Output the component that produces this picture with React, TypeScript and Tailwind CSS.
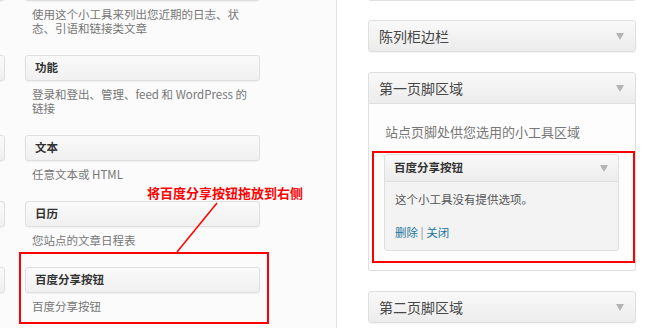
const cardCls =
  'h-[26px] shrink-0 rounded-[3px] border border-[#dfdfdf] bg-gradient-to-b from-[#fafafa] to-[#f0f0f0] shadow-[0_1px_1px_rgba(0,0,0,0.04)] flex items-center';

// the first one is cut off at the top of the picture, so its title is not shown
const leftWidgets = [
  { title: '', desc: ['使用这个小工具来列出您近期的日志、状', '态、引语和链接类文章'] },
  { title: '功能', desc: ['登录和登出、管理、feed 和 WordPress 的', '链接'] },
  { title: '文本', desc: ['任意文本或 HTML'] },
  { title: '日历', desc: ['您站点的文章日程表'] },
  { title: '百度分享按钮', desc: ['百度分享按钮'] },
];

function Arrow() {
  return (
    <svg width="8" height="7" viewBox="0 0 8 7" className="shrink-0">
      <path d="M0 0 L8 0 L4 7 Z" fill="#b4b4b4" />
    </svg>
  );
}

function SidebarHead({ title, open }: { title: string; open?: boolean }) {
  return (
    <div
      className={`h-[32px] flex items-center justify-between pl-[10px] pr-[11px] border border-[#dfdfdf] bg-gradient-to-b from-[#f9f9f9] to-[#ececec] ${
        open ? 'rounded-t-[3px]' : 'rounded-[3px] shadow-[0_1px_1px_rgba(0,0,0,0.05)]'
      }`}
    >
      <span className="text-[14px] text-[#464646] leading-none">{title}</span>
      <Arrow />
    </div>
  );
}

export default function App() {
  return (
    <div className="relative w-[650px] h-[328px] overflow-hidden flex bg-white font-['Noto_Sans_CJK_SC','Liberation_Sans',sans-serif]">
      {/* available widgets */}
      <div className="w-[337px] shrink-0 border-r border-[#e3e3e3] bg-[#fbfbfb]">
        <div className="mt-[-25px] flex flex-col">
          {leftWidgets.map((w, i) => (
            <div key={i} className="flex flex-col mb-[20px]">
              <div className="flex gap-[20px]">
                <div className={`${cardCls} w-[235px] ml-[-230px]`} />
                <div className={`${cardCls} w-[235px] pl-[9px]`}>
                  {w.title && <span className="text-[11.5px] font-bold text-[#333]">{w.title}</span>}
                </div>
              </div>
              <p className="ml-[32px] mt-[6px] text-[11.5px] leading-[14px] text-[#777]">
                {w.desc[0]}
                {w.desc[1] && (
                  <>
                    <br />
                    {w.desc[1]}
                  </>
                )}
              </p>
            </div>
          ))}
        </div>
      </div>

      {/* sidebars */}
      <div className="pl-[31px] flex flex-col gap-[20px] w-[299px]">
        <div className="mt-[-31px] h-[32px] rounded-[3px] border border-[#dfdfdf] bg-gradient-to-b from-[#f9f9f9] to-[#ececec]" />
        <div className="mt-[-1px]">
          <SidebarHead title="陈列柜边栏" />
        </div>
        <div>
          <SidebarHead title="第一页脚区域" open />
          <div className="border border-t-0 border-[#dfdfdf] rounded-b-[3px] bg-[#fdfdfd] px-[15px] pt-[19px] pb-[19px]">
            <p className="pl-[1px] text-[13px] leading-[18px] text-[#777]">站点页脚处供您选用的小工具区域</p>
            <div className="mt-[13px] mr-[1px] border border-[#dfdfdf] rounded-[3px] bg-[#f3f3f3]">
              <div className="h-[27px] flex items-center justify-between pl-[9px] pr-[10px] border-b border-[#dfdfdf] bg-gradient-to-b from-[#f9f9f9] to-[#ececec] rounded-t-[3px]">
                <span className="text-[11.5px] font-bold text-[#333]">百度分享按钮</span>
                <Arrow />
              </div>
              <div className="pl-[10px] pt-[9px] pb-[10px] text-[11.5px] leading-[16px]">
                <p className="text-[#555]">这个小工具没有提供选项。</p>
                <p className="mt-[17px]">
                  <span className="text-[#21759b]">删除</span>
                  <span className="text-[#888]"> | </span>
                  <span className="text-[#21759b]">关闭</span>
                </p>
              </div>
            </div>
          </div>
        </div>
        <SidebarHead title="第二页脚区域" />
      </div>

      {/* annotations */}
      <svg className="absolute inset-0 pointer-events-none" width="650" height="328">
        <line x1="217" y1="203" x2="177" y2="252" stroke="#ff0000" strokeWidth="1.5" />
      </svg>
      <div className="absolute left-[19px] top-[252px] w-[250px] h-[72px] border-2 border-[#ff0000]" />
      <div className="absolute left-[372px] top-[151px] w-[263px] h-[112px] border-2 border-[#ff0000]" />
      <div className="absolute left-[147px] top-[184px] text-[13px] leading-[18px] font-bold text-[#ff0000]">
        将百度分享按钮拖放到右侧
      </div>
    </div>
  );
}
